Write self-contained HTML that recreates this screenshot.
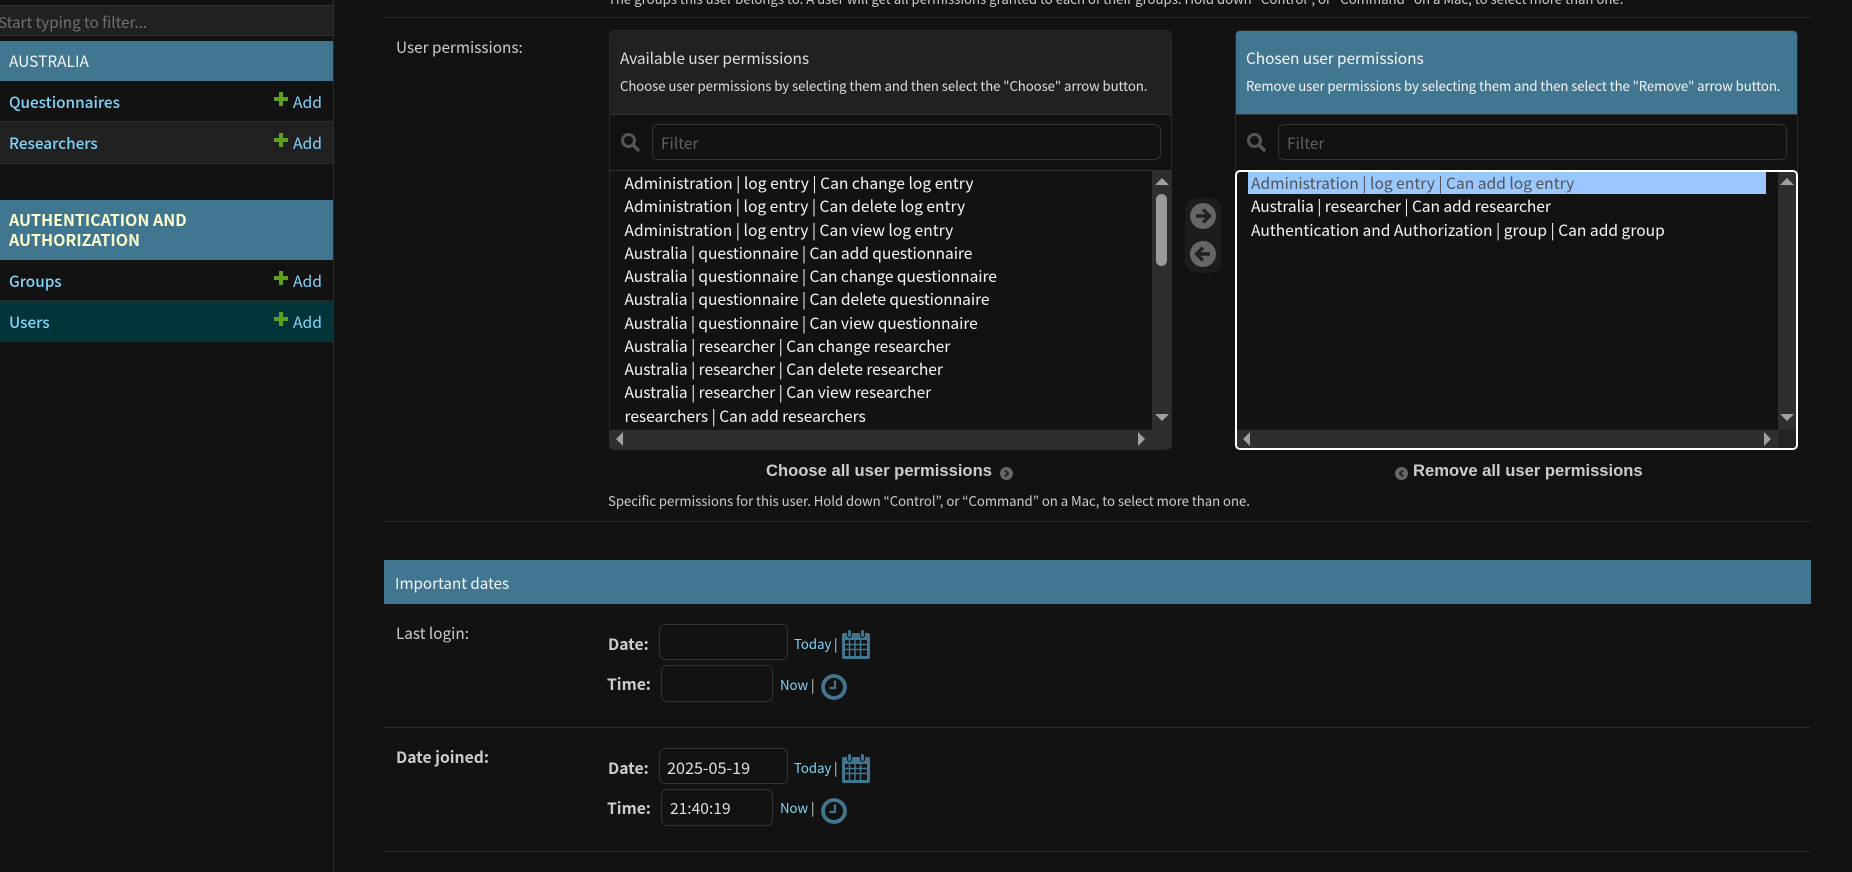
<!DOCTYPE html>
<html lang="en"><head><meta charset="utf-8"><title>Change user</title>
<style>
html,body{margin:0;padding:0;width:1852px;height:872px;overflow:hidden;background:#121212}
body{position:relative;font-family:"Noto Sans CJK JP","Liberation Sans",sans-serif;color:#eee}
div,a,span,svg{position:absolute;display:block}
.t{white-space:nowrap;line-height:20px;height:20px}
a{color:#81d4fa;text-decoration:none}
.row{left:0;width:333px}
.nav{font-size:15.3px;font-weight:500;color:#81d4fa;left:9px}
.add{font-size:15.7px;left:293px;color:#81d4fa}
.li{font-size:15.6px;color:#f4f4f4}
.q{letter-spacing:-.07px}
.r{letter-spacing:-.05px}
.box{border:1px solid #2a2a2a;border-radius:4px;box-sizing:border-box}
.inp{border:1px solid #333;border-radius:6px;box-sizing:border-box;background:#121212}
.ph{font-size:15.5px;color:#5f5f5f}
.lab{font-size:15.3px;color:#ccc}
.help{font-size:13.2px;color:#ccc}
.b{font-family:"Liberation Sans",sans-serif;font-weight:700;font-size:16.6px;color:#ccc}
.dl{font-weight:700;font-size:15.7px;color:#ccc}
.sm{font-size:13.2px;color:#81d4fa}
.sep{height:1px;background:#2a2a2a;left:384px;width:1427px}
.title{font-size:15.5px;letter-spacing:-.1px}
</style></head>
<body>
<!-- sidebar -->
<div style="left:333px;top:0;width:1px;height:872px;background:#2a2a2a"></div>
<div style="left:-1px;top:5px;width:334px;height:29px;background:#212121;border:1px solid #333;box-sizing:content-box;border-width:1px 0"></div>
<div class="t" style="left:-2px;top:12px;font-size:15.2px;color:#6f6f6f">Start typing to filter...</div>

<div class="row" style="top:41px;height:40px;background:#417690"></div>
<div class="t" style="left:9px;top:51px;font-size:15.5px;color:#f4f4f4">AUSTRALIA</div>
<div class="row" style="top:121px;height:1px;background:#2a2a2a"></div>
<div class="row" style="top:122px;height:41px;background:#212121;border-bottom:1px solid #2a2a2a"></div>
<a class="t nav" style="top:92px">Questionnaires</a>
<a class="t nav" style="top:133px">Researchers</a>

<div class="row" style="top:200px;height:60px;background:#417690"></div>
<div class="t" style="left:9px;top:209px;font-size:16px;font-weight:700;color:#ffc">AUTHENTICATION AND</div>
<div class="t" style="left:9px;top:229px;font-size:16px;font-weight:700;color:#ffc">AUTHORIZATION</div>
<div class="row" style="top:300px;height:42px;background:#02343a;border-top:1px solid #2a2a2a;border-bottom:1px solid #2a2a2a;box-sizing:border-box"></div>
<a class="t nav" style="top:271px">Groups</a>
<a class="t nav" style="top:312px">Users</a>

<svg style="left:274px;top:92px" width="14" height="14" viewBox="0 0 14 14"><path d="M5 0h4v5h5v4H9v5H5V9H0V5h5z" fill="#5f9f1f"/></svg>
<svg style="left:274px;top:133px" width="14" height="14" viewBox="0 0 14 14"><path d="M5 0h4v5h5v4H9v5H5V9H0V5h5z" fill="#5f9f1f"/></svg>
<svg style="left:274px;top:271px" width="14" height="14" viewBox="0 0 14 14"><path d="M5 0h4v5h5v4H9v5H5V9H0V5h5z" fill="#5f9f1f"/></svg>
<svg style="left:274px;top:312px" width="14" height="14" viewBox="0 0 14 14"><path d="M5 0h4v5h5v4H9v5H5V9H0V5h5z" fill="#5f9f1f"/></svg>
<a class="t add" style="top:92px">Add</a>
<a class="t add" style="top:133px">Add</a>
<a class="t add" style="top:271px">Add</a>
<a class="t add" style="top:312px">Add</a>

<!-- top -->
<div class="t help" style="left:608px;top:-11px">The groups this user belongs to. A user will get all permissions granted to each of their groups. Hold down “Control”, or “Command” on a Mac, to select more than one.</div>
<div class="sep" style="top:17px"></div>
<div class="t lab" style="left:396px;top:37px">User permissions:</div>

<!-- available -->
<div class="box" style="left:609px;top:30px;width:563px;height:420px;overflow:hidden;border-radius:5px">
  <div style="left:0;top:0;width:561px;height:83px;background:#212121;border-bottom:1px solid #333"></div>
  <div style="left:0;top:139px;width:561px;height:1px;background:#333"></div>
  <div style="left:542px;top:140px;width:19px;height:260px;background:#2e2e2e"></div>
  <div style="left:0;top:399px;width:561px;height:20px;background:#2e2e2e"></div>
</div>
<div class="t title" style="left:620px;top:48px;color:#ddd">Available user permissions</div>
<div class="t help" style="left:620px;top:76px;color:#ddd;letter-spacing:-.07px">Choose user permissions by selecting them and then select the "Choose" arrow button.</div>
<svg style="left:620px;top:132px" width="20" height="20" viewBox="0 0 20 20"><circle cx="8.500" cy="8.500" r="6" fill="none" stroke="#555" stroke-width="3"/><path d="M13 13l5 5" stroke="#555" stroke-width="3.400" stroke-linecap="round"/></svg>
<div class="inp" style="left:652px;top:124px;width:509px;height:36px"></div>
<div class="t ph" style="left:661px;top:133px">Filter</div>
<div class="t li" style="left:624.500px;top:173px;letter-spacing:.02px">Administration | log entry | Can change log entry</div>
<div class="t li" style="left:624.500px;top:196px">Administration | log entry | Can delete log entry</div>
<div class="t li" style="left:624.500px;top:220px">Administration | log entry | Can view log entry</div>
<div class="t li q" style="left:624.500px;top:243px">Australia | questionnaire | Can add questionnaire</div>
<div class="t li q" style="left:624.500px;top:266px">Australia | questionnaire | Can change questionnaire</div>
<div class="t li q" style="left:624.500px;top:289px">Australia | questionnaire | Can delete questionnaire</div>
<div class="t li q" style="left:624.500px;top:313px">Australia | questionnaire | Can view questionnaire</div>
<div class="t li r" style="left:624.500px;top:336px">Australia | researcher | Can change researcher</div>
<div class="t li r" style="left:624.500px;top:359px">Australia | researcher | Can delete researcher</div>
<div class="t li r" style="left:624.500px;top:382px">Australia | researcher | Can view researcher</div>
<div class="t li r" style="left:624.500px;top:406px">researchers | Can add researchers</div>
<div style="left:1156px;top:194px;width:11px;height:72px;background:#9a9a9a;border-radius:6px"></div>
<svg style="left:1154px;top:177px" width="16" height="10"><polygon points="8,1 15,8 1,8" fill="#a0a0a0"/></svg>
<svg style="left:1154px;top:413px" width="16" height="10"><polygon points="1,1 15,1 8,8" fill="#a0a0a0"/></svg>
<svg style="left:615px;top:431px" width="10" height="16"><polygon points="8,1 8,15 1,8" fill="#a0a0a0"/></svg>
<svg style="left:1137px;top:431px" width="10" height="16"><polygon points="1,1 1,15 8,8" fill="#a0a0a0"/></svg>

<div class="t b" style="left:766px;top:461px">Choose all user permissions</div>
<svg style="left:1000px;top:467px" width="13" height="13" viewBox="0 0 13 13"><circle cx="6.500" cy="6.500" r="6.500" fill="#666"/><path d="M5 3.500l3 3-3 3" fill="none" stroke="#222" stroke-width="2"/></svg>

<!-- move buttons -->
<div style="left:1185px;top:198px;width:37px;height:75px;background:#1c1c1c;border-radius:12px"></div>
<svg style="left:1190px;top:203px" width="26" height="26" viewBox="0 0 26 26"><circle cx="13" cy="13" r="13" fill="#666"/><path d="M6 13h13M13 6.500l6.500 6.500-6.500 6.500" fill="none" stroke="#222" stroke-width="3.400"/></svg>
<svg style="left:1190px;top:241px" width="26" height="26" viewBox="0 0 26 26"><circle cx="13" cy="13" r="13" fill="#666"/><path d="M20 13H7M13 6.500L6.500 13l6.500 6.500" fill="none" stroke="#222" stroke-width="3.400"/></svg>

<!-- chosen -->
<div class="box" style="left:1235px;top:30px;width:563px;height:145px;border-radius:5px 5px 0 0;overflow:hidden">
  <div style="left:0;top:0;width:561px;height:83px;background:#417690;border-bottom:1px solid #333"></div>
</div>
<div class="t title" style="left:1246px;top:48px;color:#f4f4f4">Chosen user permissions</div>
<div class="t help" style="left:1246px;top:76px;color:#f4f4f4;letter-spacing:-.08px">Remove user permissions by selecting them and then select the "Remove" arrow button.</div>
<svg style="left:1246px;top:132px" width="20" height="20" viewBox="0 0 20 20"><circle cx="8.500" cy="8.500" r="6" fill="none" stroke="#555" stroke-width="3"/><path d="M13 13l5 5" stroke="#555" stroke-width="3.400" stroke-linecap="round"/></svg>
<div class="inp" style="left:1278px;top:124px;width:509px;height:36px"></div>
<div class="t ph" style="left:1287px;top:133px">Filter</div>
<div style="left:1235px;top:170px;width:563px;height:280px;border:2px solid #fff;border-radius:5px;box-sizing:border-box;background:#121212;overflow:hidden">
  <div style="left:541px;top:0;width:18px;height:260px;background:#2e2e2e"></div>
  <div style="left:0;top:258px;width:541px;height:18px;background:#2e2e2e"></div>
  <div style="left:541px;top:258px;width:18px;height:18px;background:#232323"></div>
</div>
<div style="left:1248px;top:172px;width:518px;height:22px;background:#99c8ff"></div>
<div class="t li" style="left:1251px;top:173px;color:#545454">Administration | log entry | Can add log entry</div>
<div class="t li" style="left:1251px;top:196px;letter-spacing:-.08px">Australia | researcher | Can add researcher</div>
<div class="t li" style="left:1251px;top:220px">Authentication and Authorization | group | Can add group</div>
<svg style="left:1779px;top:177px" width="16" height="10"><polygon points="8,1 15,8 1,8" fill="#a0a0a0"/></svg>
<svg style="left:1779px;top:413px" width="16" height="10"><polygon points="1,1 15,1 8,8" fill="#a0a0a0"/></svg>
<svg style="left:1242px;top:431px" width="10" height="16"><polygon points="8,1 8,15 1,8" fill="#a0a0a0"/></svg>
<svg style="left:1763px;top:431px" width="10" height="16"><polygon points="1,1 1,15 8,8" fill="#a0a0a0"/></svg>

<svg style="left:1395px;top:467px" width="13" height="13" viewBox="0 0 13 13"><circle cx="6.500" cy="6.500" r="6.500" fill="#666"/><path d="M8 3.500l-3 3 3 3" fill="none" stroke="#222" stroke-width="2"/></svg>
<div class="t b" style="left:1413px;top:461px">Remove all user permissions</div>

<div class="t help" style="left:608px;top:491px;letter-spacing:-.04px">Specific permissions for this user. Hold down “Control”, or “Command” on a Mac, to select more than one.</div>
<div class="sep" style="top:521px"></div>

<!-- important dates -->
<div style="left:384px;top:560px;width:1427px;height:44px;background:#417690"></div>
<div class="t" style="left:395px;top:573px;font-size:15.2px;color:#f4f4f4">Important dates</div>

<div class="t lab" style="left:396px;top:623px">Last login:</div>
<div class="t dl" style="left:608px;top:634px">Date:</div>
<div class="inp" style="left:659px;top:624px;width:129px;height:36px"></div>
<a class="t sm" style="left:794px;top:634px">Today</a>
<div class="t sm" style="left:834px;top:634px;color:#ddd">|</div>
<svg style="left:842px;top:629px" width="28" height="30" viewBox="0 0 28 30"><path d="M2 4h24a2 2 0 0 1 2 2v22a2 2 0 0 1-2 2H2a2 2 0 0 1-2-2V6a2 2 0 0 1 2-2z" fill="#417690"/><rect x="5.500" y="0.500" width="4" height="8" rx="2" fill="#417690" stroke="#121212"/><rect x="18.500" y="0.500" width="4" height="8" rx="2" fill="#417690" stroke="#121212"/><path d="M3 11h22v16H3z" fill="#121212"/><path d="M3 15.500h22M3 20.500h22M7.500 11v16M13 11v16M18.500 11v16" stroke="#417690" stroke-width="1.500"/></svg>

<div class="t dl" style="left:607px;top:674px">Time:</div>
<div class="inp" style="left:661px;top:665px;width:112px;height:37px"></div>
<a class="t sm" style="left:780px;top:675px">Now</a>
<div class="t sm" style="left:811px;top:675px;color:#ddd">|</div>
<svg style="left:821px;top:674px" width="26" height="26" viewBox="0 0 26 26"><circle cx="13" cy="13" r="11" fill="none" stroke="#417690" stroke-width="3.800"/><path d="M14 6.500v7.500H8.500" fill="none" stroke="#417690" stroke-width="2.200"/></svg>
<div class="sep" style="top:727px"></div>

<div class="t dl" style="left:396px;top:747px">Date joined:</div>
<div class="t dl" style="left:608px;top:758px">Date:</div>
<div class="inp" style="left:659px;top:748px;width:129px;height:36px"></div>
<div class="t li" style="left:667px;top:757px;color:#ddd;font-size:16.2px">2025-05-19</div>
<a class="t sm" style="left:794px;top:758px">Today</a>
<div class="t sm" style="left:834px;top:758px;color:#ddd">|</div>
<svg style="left:842px;top:753px" width="28" height="30" viewBox="0 0 28 30"><path d="M2 4h24a2 2 0 0 1 2 2v22a2 2 0 0 1-2 2H2a2 2 0 0 1-2-2V6a2 2 0 0 1 2-2z" fill="#417690"/><rect x="5.500" y="0.500" width="4" height="8" rx="2" fill="#417690" stroke="#121212"/><rect x="18.500" y="0.500" width="4" height="8" rx="2" fill="#417690" stroke="#121212"/><path d="M3 11h22v16H3z" fill="#121212"/><path d="M3 15.500h22M3 20.500h22M7.500 11v16M13 11v16M18.500 11v16" stroke="#417690" stroke-width="1.500"/></svg>

<div class="t dl" style="left:607px;top:798px">Time:</div>
<div class="inp" style="left:661px;top:789px;width:112px;height:37px"></div>
<div class="t li" style="left:670px;top:798px;color:#ddd">21:40:19</div>
<a class="t sm" style="left:780px;top:798px">Now</a>
<div class="t sm" style="left:811px;top:798px;color:#ddd">|</div>
<svg style="left:821px;top:798px" width="26" height="26" viewBox="0 0 26 26"><circle cx="13" cy="13" r="11" fill="none" stroke="#417690" stroke-width="3.800"/><path d="M14 6.500v7.500H8.500" fill="none" stroke="#417690" stroke-width="2.200"/></svg>
<div class="sep" style="top:851px"></div>
</body></html>
